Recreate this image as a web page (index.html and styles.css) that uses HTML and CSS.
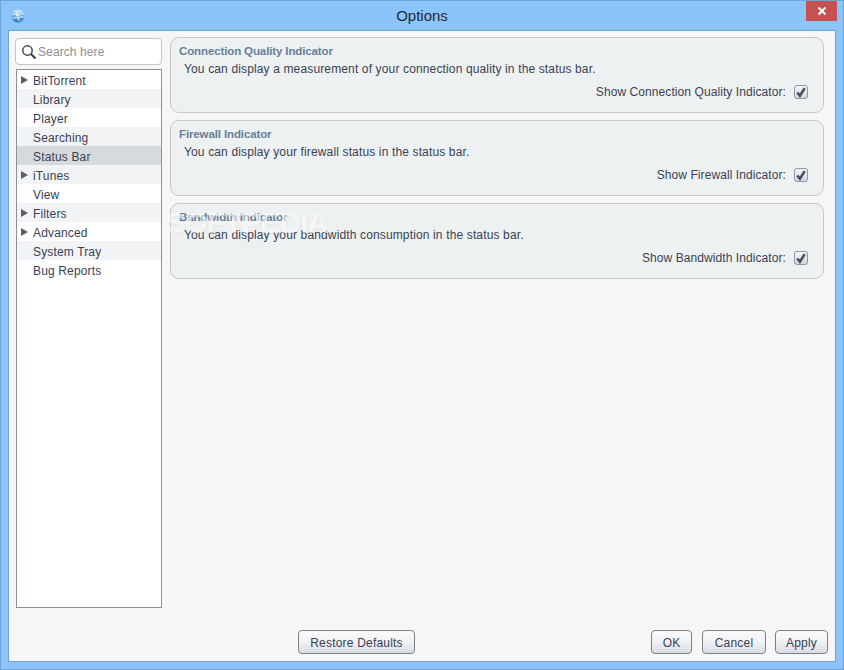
FILE: index.html
```html
<!DOCTYPE html>
<html lang="en">
<head>
<meta charset="utf-8">
<title>Options</title>
<link rel="stylesheet" href="styles.css">
</head>
<body>
<div class="window">
  <header class="titlebar">
    <svg class="app-icon" width="14" height="14" viewBox="0 0 16 16">
      <defs>
        <linearGradient id="globe" x1="0" y1="0" x2="0" y2="1">
          <stop offset="0" stop-color="#cfe8fb"/>
          <stop offset="0.5" stop-color="#6fb0e4"/>
          <stop offset="1" stop-color="#2a78c0"/>
        </linearGradient>
      </defs>
      <circle cx="8" cy="8" r="7.500" fill="url(#globe)"/>
      <path d="M1.500 6.500C5 4 6 8 8 7.500S11 4.500 14.500 5.500M2 10.500C5 9 7 11 9 10S12 8 14.500 9.500M5.500 2L9.500 14M10.500 2L6.500 7" fill="none" stroke="#fff" stroke-width="1"/>
    </svg>
    <h1 class="title">Options</h1>
    <button class="close" aria-label="Close">
      <svg width="10" height="10" viewBox="0 0 10 10"><path d="M1.500 1.500L8.500 8.500M8.500 1.500L1.500 8.500" stroke="#fff" stroke-width="2" fill="none"/></svg>
    </button>
  </header>
  <main class="client">
    <div class="columns">
      <aside class="sidebar">
        <div class="search">
          <svg width="16" height="16" viewBox="0 0 16 16"><circle cx="6.500" cy="6.500" r="4.700" fill="none" stroke="#3c4650" stroke-width="1.500"/><path d="M10 10L14.500 14.500" stroke="#3c4650" stroke-width="2.200" fill="none"/></svg>
          <span class="placeholder">Search here</span>
        </div>
        <ul class="tree">
          <li class="row parent">BitTorrent</li>
          <li class="row alt">Library</li>
          <li class="row">Player</li>
          <li class="row alt">Searching</li>
          <li class="row selected">Status Bar</li>
          <li class="row alt parent">iTunes</li>
          <li class="row">View</li>
          <li class="row alt parent">Filters</li>
          <li class="row parent">Advanced</li>
          <li class="row alt">System Tray</li>
          <li class="row">Bug Reports</li>
        </ul>
      </aside>
      <section class="panels">
        <article class="panel">
          <h2 class="panel-title">Connection Quality Indicator</h2>
          <p class="panel-text">You can display a measurement of your connection quality in the status bar.</p>
          <div class="option">Show Connection Quality Indicator:<span class="check"><svg width="13" height="13" viewBox="0 0 13 13"><path d="M2.500 6.500L5.300 10L10.500 1.800" fill="none" stroke="#46525e" stroke-width="2.800"/></svg></span></div>
        </article>
        <article class="panel">
          <h2 class="panel-title">Firewall Indicator</h2>
          <p class="panel-text">You can display your firewall status in the status bar.</p>
          <div class="option">Show Firewall Indicator:<span class="check"><svg width="13" height="13" viewBox="0 0 13 13"><path d="M2.500 6.500L5.300 10L10.500 1.800" fill="none" stroke="#46525e" stroke-width="2.800"/></svg></span></div>
        </article>
        <article class="panel">
          <h2 class="panel-title">Bandwidth Indicator</h2>
          <p class="panel-text">You can display your bandwidth consumption in the status bar.</p>
          <div class="option">Show Bandwidth Indicator:<span class="check"><svg width="13" height="13" viewBox="0 0 13 13"><path d="M2.500 6.500L5.300 10L10.500 1.800" fill="none" stroke="#46525e" stroke-width="2.800"/></svg></span></div>
        </article>
      </section>
    </div>
    <footer class="footer">
      <button class="btn restore">Restore Defaults</button>
      <div class="actions">
        <button class="btn ok">OK</button>
        <button class="btn cancel">Cancel</button>
        <button class="btn apply">Apply</button>
      </div>
    </footer>
    <div class="watermark">SOFTPEDIA<sup class="reg">®</sup></div>
  </main>
</div>
</body>
</html>
```
FILE: styles.css
```css
* { box-sizing: border-box; }
html, body { margin: 0; padding: 0; }
body {
  width: 844px;
  height: 670px;
  overflow: hidden;
  font-family: "Liberation Sans", Arial, sans-serif;
  font-size: 12px;
  color: #3a3f55;
}
.window {
  width: 844px;
  height: 670px;
  display: flex;
  flex-direction: column;
  background: #8ac4f9;
  border: 1px solid #6fa3d6;
  padding: 0 7px 7px;
}
.titlebar {
  height: 29px;
  flex: none;
  display: flex;
  align-items: center;
  justify-content: center;
  position: relative;
}
.app-icon { position: absolute; left: 3px; top: 8px; }
.title {
  margin: 0;
  font-size: 15px;
  font-weight: 400;
  color: #1f2a36;
  line-height: 26px;
}
.close {
  position: absolute;
  right: -1px;
  top: 0;
  width: 31px;
  height: 20px;
  padding: 0;
  border: 0;
  background: #c75050;
  display: flex;
  align-items: center;
  justify-content: center;
}
.client {
  flex: 1;
  min-height: 0;
  position: relative;
  display: flex;
  flex-direction: column;
  background: #f6f6f6;
  border: 1px solid #6fa3d6;
  padding: 6px 7px 7px 6px;
}
.columns {
  flex: 1;
  min-height: 0;
  display: flex;
  gap: 8px;
}
.sidebar {
  width: 147px;
  flex: none;
  display: flex;
  flex-direction: column;
  gap: 4px;
  padding-top: 1px;
}
.search {
  height: 27px;
  flex: none;
  display: flex;
  align-items: center;
  gap: 1px;
  padding-left: 5px;
  background: #fff;
  border: 1px solid #c6c6c6;
  border-radius: 4px;
}
.placeholder { color: #8e8e96; font-size: 12px; letter-spacing: 0.1px; }
.tree {
  list-style: none;
  margin: 0 0 0 1px;
  padding: 0;
  height: 539px;
  flex: none;
  background: #fff;
  border: 1px solid #8a919c;
}
.row {
  height: 19px;
  line-height: 19px;
  padding: 2px 0 0 16px;
  position: relative;
  letter-spacing: 0.15px;
}
.alt { background: #f2f3f5; }
.selected { background: #d5dadd; }
.parent::before {
  content: "";
  position: absolute;
  left: 4px;
  top: 6px;
  border-left: 7px solid #5e5e5e;
  border-top: 4px solid transparent;
  border-bottom: 4px solid transparent;
}
.panels {
  flex: 1;
  min-width: 0;
  display: flex;
  flex-direction: column;
  gap: 7px;
  margin-right: 4px;
}
.panel {
  height: 76px;
  flex: none;
  padding: 7px 15px 0 8px;
  background: #eef1f2;
  border: 1px solid #c8c8c8;
  border-radius: 9px;
}
.panel-title {
  margin: 0;
  font-size: 11.500px;
  line-height: 13px;
  font-weight: 700;
  letter-spacing: -0.12px;
  color: #65809a;
}
.panel-text {
  margin: 4px 0 0 5px;
  line-height: 14px;
  letter-spacing: 0.14px;
}
.option {
  margin-top: 9px;
  display: flex;
  justify-content: flex-end;
  align-items: center;
  gap: 8px;
  line-height: 14px;
  letter-spacing: 0.08px;
}
.check {
  width: 14px;
  height: 14px;
  display: flex;
  align-items: center;
  justify-content: center;
  background: linear-gradient(#f4f6f8, #cfd8e2);
  border: 1px solid #8a98a8;
  border-radius: 3px;
}
.footer {
  height: 24px;
  flex: none;
  display: flex;
  justify-content: space-between;
  position: relative;
}
.actions { display: flex; gap: 10px; }
.btn {
  height: 24px;
  padding: 2px 0 0;
  font: inherit;
  color: #3a3f55;
  letter-spacing: 0.2px;
  background: linear-gradient(#fbfbfc, #f0f1f4 50%, #d8dce6);
  border: 1px solid #7d8186;
  border-radius: 4px;
}
.restore { width: 117px; margin-left: 283px; }
.ok { width: 41px; }
.cancel { width: 64px; }
.apply { width: 53px; margin-left: -1px; }
.watermark {
  position: absolute;
  left: 157px;
  top: 172px;
  font-size: 30px;
  line-height: 40px;
  font-weight: 700;
  letter-spacing: -1px;
  color: rgba(255, 255, 255, 0.6);
  text-shadow: 1px 1px 1px rgba(0, 0, 0, 0.05);
  pointer-events: none;
}
.reg { font-size: 11px; vertical-align: top; line-height: 20px; font-weight: 400; }
```
